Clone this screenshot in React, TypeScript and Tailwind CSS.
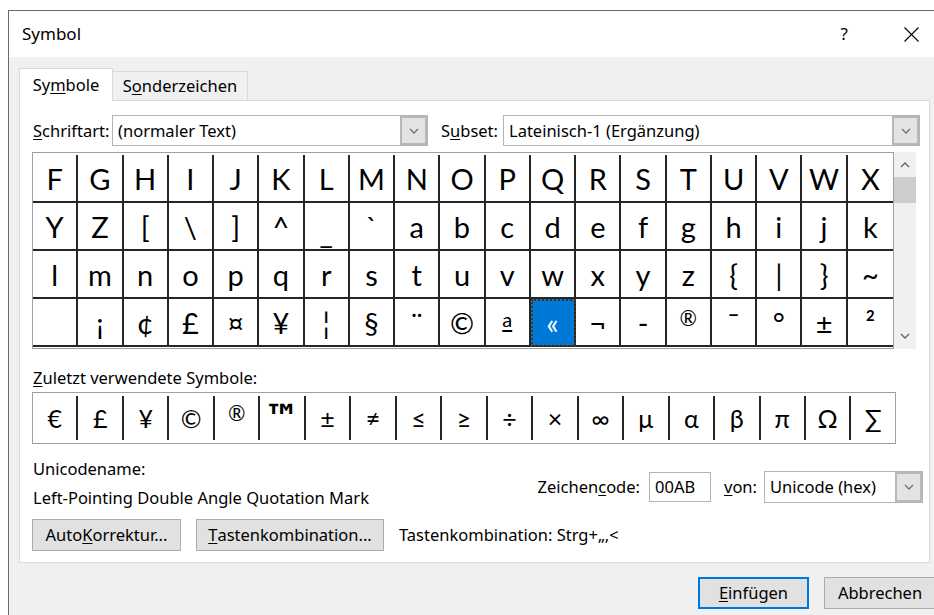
const symbolRows = [
  ['F', 'G', 'H', 'I', 'J', 'K', 'L', 'M', 'N', 'O', 'P', 'Q', 'R', 'S', 'T', 'U', 'V', 'W', 'X'],
  ['Y', 'Z', '[', '\\', ']', '^', '_', '`', 'a', 'b', 'c', 'd', 'e', 'f', 'g', 'h', 'i', 'j', 'k'],
  ['l', 'm', 'n', 'o', 'p', 'q', 'r', 's', 't', 'u', 'v', 'w', 'x', 'y', 'z', '{', '|', '}', '~'],
  ['', '¡', '¢', '£', '¤', '¥', '¦', '§', '¨', '©', 'ª', '«', '¬', '-', '®', '¯', '°', '±', '²'],
]

const recentSymbols = ['€', '£', '¥', '©', '®', '™', '±', '≠', '≤', '≥', '÷', '×', '∞', 'µ', 'α', 'β', 'π', 'Ω', '∑']

// selected cell: row 4, column 12 («)
const SEL_ROW = 3
const SEL_COL = 11

// glyphs that the symbol font draws small / raised
function Glyph({ ch, recent = false }: { ch: string; recent?: boolean }) {
  if (ch === '®') {
    return <span className={recent ? 'text-[21px] -translate-y-[6px]' : 'text-[21px] -translate-y-[5px]'}>®</span>
  }
  if (ch === '™') {
    return <span className="font-['DejaVu_Sans',sans-serif] text-[36px] font-bold leading-none">™</span>
  }
  if (ch === 'ª') {
    return <span className="text-[20px] underline decoration-[1.5px] underline-offset-[3px] -translate-y-[3px]">a</span>
  }
  if (ch === '_') {
    return <span className="translate-y-[6px]">_</span>
  }
  return <span>{ch}</span>
}

function Chevron({ up = false, className = '' }: { up?: boolean; className?: string }) {
  return (
    <svg width="10" height="6" viewBox="0 0 10 6" className={className}>
      <polyline
        points={up ? '1,5 5,1 9,5' : '1,1 5,5 9,1'}
        fill="none"
        stroke="currentColor"
        strokeWidth="1.3"
      />
    </svg>
  )
}

function Dropdown({ value, className = '' }: { value: string; className?: string }) {
  return (
    <div className={`flex h-[31px] border border-[#b4b4b4] bg-white ${className}`}>
      <div className="flex flex-1 items-center pl-[5px] whitespace-nowrap">{value}</div>
      <div className="flex w-[27px] items-center justify-center border-2 border-[#b8b8b8] bg-[#e3e3e3] text-[#707070]">
        <Chevron />
      </div>
    </div>
  )
}

function Btn({ children, className = '' }: { children: React.ReactNode; className?: string }) {
  return (
    <div className={`flex h-[32px] shrink-0 items-center justify-center border border-[#adadad] bg-[#e1e1e1] ${className}`}>
      {children}
    </div>
  )
}

export default function App() {
  return (
    <div className="h-[615px] w-[934px] overflow-hidden bg-white pl-[8px] pt-[10px] font-['Noto_Sans',sans-serif] text-[16.5px] leading-[20px] text-black">
      <div className="flex h-[605px] w-[926px] flex-col overflow-hidden border-l border-t border-[#6b6b6b]">
        {/* title bar */}
        <div className="flex h-[46px] items-center bg-white pl-[13px]">
          <span className="text-[17px]">Symbol</span>
          <span className="ml-auto mr-[56px] text-[17px]">?</span>
          <svg width="15" height="15" viewBox="0 0 15 15" className="mr-[15px]">
            <path d="M0.5 0.5 L14.5 14.5 M14.5 0.5 L0.5 14.5" stroke="#000" strokeWidth="1.1" />
          </svg>
        </div>

        <div className="flex flex-1 flex-col bg-[#f0f0f0] pl-[10px] pt-[11px]">
          {/* tabs */}
          <div className="flex h-[32px] items-end">
            <div className="z-10 -mb-px flex h-[33px] w-[94px] items-center justify-center border border-b-0 border-[#d9d9d9] bg-white">
              Sy<span className="underline underline-offset-2">m</span>bole
            </div>
            <div className="flex h-[29px] w-[135px] items-center justify-center border border-b-0 border-l-0 border-[#d9d9d9] bg-[#f0f0f0]">
              S<span className="underline underline-offset-2">o</span>nderzeichen
            </div>
          </div>

          {/* tab page */}
          <div className="flex h-[463px] w-[911px] flex-col border border-[#d9d9d9] bg-white pl-[12px] pt-[14px]">
            <div className="flex items-center">
              <div className="w-[80px] pl-[1px]">
                <span className="underline underline-offset-2">S</span>chriftart:
              </div>
              <Dropdown value="(normaler Text)" className="w-[316px]" />
              <div className="ml-[13px] w-[62px]">
                S<span className="underline underline-offset-2">u</span>bset:
              </div>
              <Dropdown value="Lateinisch-1 (Ergänzung)" className="w-[417px]" />
            </div>

            {/* character grid */}
            <div className="mt-[6px] flex">
              <div className="w-[862px] border border-[#a0a0a0] pb-[1px] pt-[2px] font-['Lato','Noto_Sans',sans-serif] text-[29px] leading-none">
                {symbolRows.map((row, r) => (
                  <div key={r} className="grid grid-cols-[repeat(19,1fr)]">
                    {row.map((ch, c) => {
                      const selected = r === SEL_ROW && c === SEL_COL
                      return (
                        <div
                          key={c}
                          className={`flex h-[48px] items-center justify-center border-b-2 border-[#262626] ${
                            c < 18 ? 'border-r-2' : ''
                          } ${
                            selected
                              ? 'bg-[#0078d7] text-white outline-2 -outline-offset-2 outline-dotted outline-[#4a3316]'
                              : ''
                          }`}
                        >
                          <Glyph ch={ch} />
                        </div>
                      )
                    })}
                  </div>
                ))}
              </div>
              <div className="flex w-[22px] flex-col items-center bg-[#f0f0f0] text-[#606060]">
                <Chevron up className="mt-[10px]" />
                <div className="mt-[9px] h-[26px] w-[22px] bg-[#cdcdcd]" />
                <Chevron className="mb-[10px] mt-auto" />
              </div>
            </div>

            <div className="mt-[19px] pl-[1px]">
              <span className="underline underline-offset-2">Z</span>uletzt verwendete Symbole:
            </div>
            <div className="mt-[4px] flex h-[52px] w-[864px] border border-[#a0a0a0] py-[3px] font-['Lato','Noto_Sans',sans-serif] text-[25px] leading-none">
              {recentSymbols.map((ch, i) => (
                <div
                  key={i}
                  className={`flex flex-1 items-center justify-center ${i < 18 ? 'border-r-2 border-[#262626]' : ''}`}
                >
                  <Glyph ch={ch} recent />
                </div>
              ))}
            </div>

            <div className="mt-[15px] flex items-start">
              <div className="flex flex-col gap-[9px] pl-[1px]">
                <div>Unicodename:</div>
                <div>Left-Pointing Double Angle Quotation Mark</div>
              </div>
              <div className="ml-auto mr-[6px] mt-[12px] flex items-center">
                <div>
                  Zeichen<span className="underline underline-offset-2">c</span>ode:
                </div>
                <div className="ml-[9px] flex h-[30px] w-[62px] items-center border border-[#b4b4b4] pl-[5px]">00AB</div>
                <div className="ml-[13px]">
                  <span className="underline underline-offset-2">v</span>on:
                </div>
                <Dropdown value="Unicode (hex)" className="ml-[7px] h-[32px] w-[159px]" />
              </div>
            </div>

            <div className="mt-[11px] flex items-center">
              <Btn className="w-[149px]">
                Auto<span className="underline underline-offset-2">K</span>orrektur...
              </Btn>
              <Btn className="ml-[15px] w-[188px]">
                <span className="underline underline-offset-2">T</span>astenkombination...
              </Btn>
              <div className="ml-[15px]">Tastenkombination: Strg+„,&lt;</div>
            </div>
          </div>

          {/* dialog buttons */}
          <div className="mt-[14px] flex pl-[679px]">
            <div className="flex h-[32px] w-[111px] shrink-0 items-center justify-center border-2 border-[#0078d7] bg-[#e1e1e1]">
              <span className="underline underline-offset-2">E</span>infügen
            </div>
            <Btn className="ml-[15px] w-[112px]">Abbrechen</Btn>
          </div>
        </div>
      </div>
    </div>
  )
}
